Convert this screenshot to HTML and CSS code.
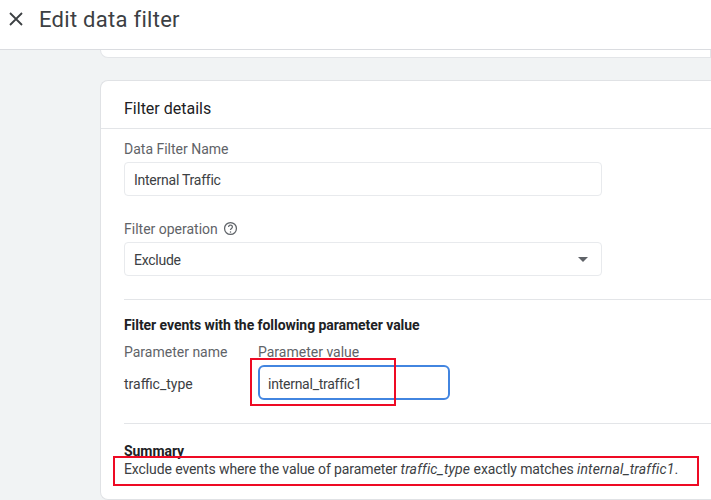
FILE: index.html
```html
<!DOCTYPE html>
<html lang="en">
<head>
<meta charset="utf-8">
<title>Edit data filter</title>
<link rel="stylesheet" href="styles.css">
</head>
<body>
<header class="topbar">
  <svg class="close" viewBox="0 0 16 16" width="16" height="16"><path d="M2 2 14 14M14 2 2 14" fill="none" stroke="#3c4043" stroke-width="1.8"/></svg>
  <h1>Edit data filter</h1>
</header>
<main class="content">
  <div class="card-prev"></div>
  <section class="card">
    <h2>Filter details</h2>
    <div class="body">
      <label class="label">Data Filter Name</label>
      <div class="field">Internal Traffic</div>
      <div class="label op">Filter operation
        <svg viewBox="0 0 24 24" width="15" height="15"><circle cx="12" cy="12" r="9.5" fill="none" stroke="#5f6368" stroke-width="2"/><path d="M9 9.5a3 3 0 1 1 4.6 2.5c-1 .7-1.6 1.3-1.6 2.5" fill="none" stroke="#5f6368" stroke-width="2"/><circle cx="12" cy="17.4" r="1.2" fill="#5f6368"/></svg>
      </div>
      <div class="field select">Exclude<span class="caret"></span></div>
      <hr class="rule rule-a">
      <h3>Filter events with the following parameter value</h3>
      <div class="params">
        <span class="label">Parameter name</span>
        <span class="label">Parameter value</span>
        <span class="pname">traffic_type</span>
        <div class="field focus">internal_traffic1</div>
      </div>
      <hr class="rule rule-b">
      <h3 class="sum-h">Summary</h3>
      <p class="summary">Exclude events where the value of parameter <em>traffic_type</em> exactly matches <em>internal_traffic1</em>.</p>
    </div>
  </section>
</main>
<div class="mark mark-value"></div>
<div class="mark mark-summary"></div>
</body>
</html>
```
FILE: styles.css
```css
* { box-sizing: border-box; }
html, body { margin: 0; height: 100%; overflow: hidden; }
body { background: #f1f3f4; font-family: Roboto, "Liberation Sans", sans-serif; color: #3c4043; position: relative; }
.topbar { height: 50px; background: #fff; border-bottom: 1px solid #dadce0; display: flex; align-items: flex-start; padding: 11px 0 0 8px; }
.close { margin-right: 15px; }
h1 { margin: -5px 0 0; font-size: 22px; line-height: 28px; font-weight: 400; color: #3c4043; letter-spacing: .28px; }
.content { padding-left: 100px; }
.card-prev { height: 8px; background: #fff; border: 1px solid #e3e5e8; border-top: 0; border-radius: 0 0 0 8px; margin-bottom: 22px; }
.card { background: #fff; border: 1px solid #e0e2e5; border-right: 0; border-radius: 8px 0 0 8px; height: 420px; }
h2 { margin: 0; height: 48px; font-size: 16px; font-weight: 400; line-height: 55px; padding-left: 23px; color: #202124; border-bottom: 1px solid #e3e5e8; }
.body { padding: 10px 0 0 23px; }
.label { display: block; font-size: 14px; line-height: 20px; color: #5f6368; }
.field { width: 478px; height: 34px; border: 1px solid #e8eaed; border-radius: 4px; font-size: 14px; letter-spacing: -.25px; line-height: 34px; padding-left: 9px; margin-top: 3px; color: #3c4043; }
.op { display: flex; align-items: center; gap: 5px; margin-top: 23px; height: 20px; }
.op svg { margin-top: -2px; }
.select { position: relative; margin-top: 3px; }
.caret { position: absolute; right: 13px; top: 14px; border: 5px solid transparent; border-top: 5px solid #5f6368; border-bottom: 0; }
.rule { border: 0; height: 1px; margin: 0; background: #e3e5e8; }
.rule-a { margin-top: 23px; }
h3 { margin: 16px 0 0; font-size: 14px; line-height: 18px; font-weight: 700; letter-spacing: -.06px; color: #202124; }
.params { display: grid; grid-template-columns: 134px 192px; margin-top: 9px; row-gap: 4px; align-items: center; }
.params .label { line-height: 18px; }
.pname { font-size: 14px; line-height: 20px; padding-top: 2px; color: #3c4043; }
.focus { width: 192px; height: 35px; border: 2px solid #4285e0; border-radius: 6px; padding-left: 8px; line-height: 34px; margin-top: 0; }
.rule-b { margin-top: 23px; }
.sum-h { margin-top: 18px; }
.summary { margin: -1px 0 0; font-size: 14px; line-height: 20px; letter-spacing: -.1px; color: #3c4043; }
.summary em { letter-spacing: .15px; }
.mark { position: absolute; border: 2.5px solid #ee0a24; pointer-events: none; }
.mark-value { left: 250px; top: 358px; width: 146px; height: 48px; }
.mark-summary { left: 113px; top: 456px; width: 586px; height: 30px; }
```
